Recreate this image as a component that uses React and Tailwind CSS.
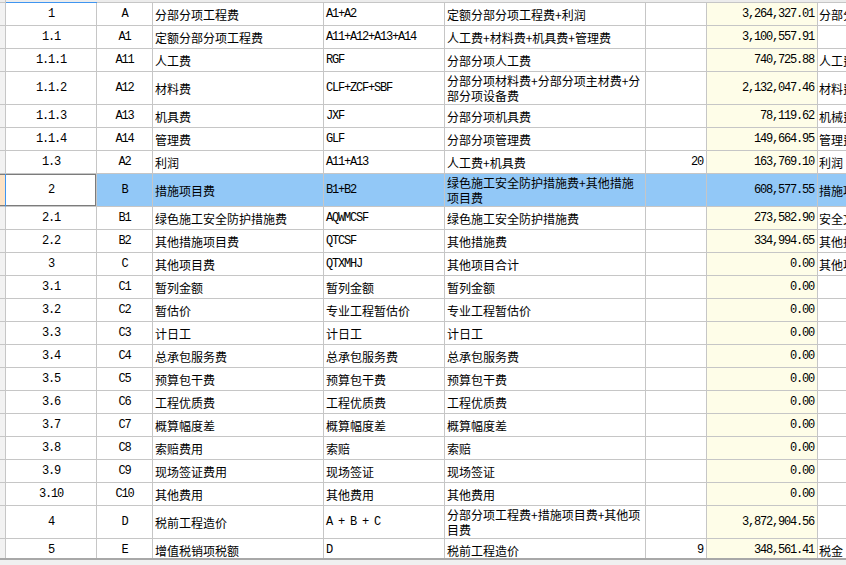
import React from "react";

const rows = [
  { n: "1", c: "A", name: "分部分项工程费", f: "A1+A2", d: "定额分部分项工程费+利润", r: "", v: "3,264,327.01", k: "分部分项工程费" },
  { n: "1.1", c: "A1", name: "定额分部分项工程费", f: "A11+A12+A13+A14", d: "人工费+材料费+机具费+管理费", r: "", v: "3,100,557.91", k: "" },
  { n: "1.1.1", c: "A11", name: "人工费", f: "RGF", d: "分部分项人工费", r: "", v: "740,725.88", k: "人工费" },
  { n: "1.1.2", c: "A12", name: "材料费", f: "CLF+ZCF+SBF", d: "分部分项材料费+分部分项主材费+分部分项设备费", r: "", v: "2,132,047.46", k: "材料费", tall: true },
  { n: "1.1.3", c: "A13", name: "机具费", f: "JXF", d: "分部分项机具费", r: "", v: "78,119.62", k: "机械费" },
  { n: "1.1.4", c: "A14", name: "管理费", f: "GLF", d: "分部分项管理费", r: "", v: "149,664.95", k: "管理费" },
  { n: "1.3", c: "A2", name: "利润", f: "A11+A13", d: "人工费+机具费", r: "20", v: "163,769.10", k: "利润" },
  { n: "2", c: "B", name: "措施项目费", f: "B1+B2", d: "绿色施工安全防护措施费+其他措施项目费", r: "", v: "608,577.55", k: "措施项目费", tall: true, sel: true },
  { n: "2.1", c: "B1", name: "绿色施工安全防护措施费", f: "AQWMCSF", d: "绿色施工安全防护措施费", r: "", v: "273,582.90", k: "安全文明施工费" },
  { n: "2.2", c: "B2", name: "其他措施项目费", f: "QTCSF", d: "其他措施费", r: "", v: "334,994.65", k: "其他措施费" },
  { n: "3", c: "C", name: "其他项目费", f: "QTXMHJ", d: "其他项目合计", r: "", v: "0.00", k: "其他项目费" },
  { n: "3.1", c: "C1", name: "暂列金额", f: "暂列金额", d: "暂列金额", r: "", v: "0.00", k: "" },
  { n: "3.2", c: "C2", name: "暂估价", f: "专业工程暂估价", d: "专业工程暂估价", r: "", v: "0.00", k: "" },
  { n: "3.3", c: "C3", name: "计日工", f: "计日工", d: "计日工", r: "", v: "0.00", k: "" },
  { n: "3.4", c: "C4", name: "总承包服务费", f: "总承包服务费", d: "总承包服务费", r: "", v: "0.00", k: "" },
  { n: "3.5", c: "C5", name: "预算包干费", f: "预算包干费", d: "预算包干费", r: "", v: "0.00", k: "" },
  { n: "3.6", c: "C6", name: "工程优质费", f: "工程优质费", d: "工程优质费", r: "", v: "0.00", k: "" },
  { n: "3.7", c: "C7", name: "概算幅度差", f: "概算幅度差", d: "概算幅度差", r: "", v: "0.00", k: "" },
  { n: "3.8", c: "C8", name: "索赔费用", f: "索赔", d: "索赔", r: "", v: "0.00", k: "" },
  { n: "3.9", c: "C9", name: "现场签证费用", f: "现场签证", d: "现场签证", r: "", v: "0.00", k: "" },
  { n: "3.10", c: "C10", name: "其他费用", f: "其他费用", d: "其他费用", r: "", v: "0.00", k: "" },
  { n: "4", c: "D", name: "税前工程造价", f: "A + B + C", d: "分部分项工程费+措施项目费+其他项目费", r: "", v: "3,872,904.56", k: "", tall: true },
  { n: "5", c: "E", name: "增值税销项税额", f: "D", d: "税前工程造价", r: "9", v: "348,561.41", k: "税金" },
];

const cjk = /[\u4e00-\u9fff]/;

function Txt({ t }) {
  if (!t) return null;
  if (cjk.test(t)) {
    return (
      <span className="font-['Noto_Sans_CJK_SC',sans-serif] text-[12px] leading-[15px] text-black">{t}</span>
    );
  }
  return (
    <span className="font-['Liberation_Mono',monospace] text-[12px] tracking-[-1.2px] leading-[15px] whitespace-pre text-black">{t}</span>
  );
}

const cell = "shrink-0 h-full border-r border-b border-[#c6c6c6] flex items-center overflow-hidden";

function Row({ row }) {
  const sel = row.sel;
  const hl = sel ? "bg-[#92c8f7]" : "";
  return (
    <div className={`flex shrink-0 ${row.tall ? "h-[33px]" : "h-[23px]"}`}>
      <div
        className={`relative w-[6px] ${cell} ${sel ? "bg-[#fde3c6] border-r-[#3f95f0]" : "bg-[#f2f2f2]"}`}
      >
        {sel && <div className="absolute left-0 right-0 top-[-1px] bottom-[-1px] border-y-2 border-[#7c7c7c]" />}
      </div>
      <div className={`relative w-[91px] ${cell} justify-center bg-white`}>
        <Txt t={row.n} />
        {sel && (
          <div className="absolute left-0 right-[-1px] top-[-1px] bottom-[-1px] border-2 border-l-0 border-[#7c7c7c]" />
        )}
      </div>
      <div className={`w-[56px] ${cell} justify-center ${hl}`}>
        <Txt t={row.c} />
      </div>
      <div className={`w-[171px] ${cell} pl-[2px] ${hl}`}>
        <Txt t={row.name} />
      </div>
      <div className={`w-[121px] ${cell} pl-[2px] ${hl}`}>
        <Txt t={row.f} />
      </div>
      <div className={`w-[201px] ${cell} pl-[2px] pr-[1px] ${hl}`}>
        <Txt t={row.d} />
      </div>
      <div className={`w-[61px] ${cell} justify-end pr-[3px] ${hl}`}>
        <Txt t={row.r} />
      </div>
      <div className={`w-[111px] ${cell} justify-end pr-[3px] ${sel ? hl : "bg-[#fefde8]"}`}>
        <Txt t={row.v} />
      </div>
      <div className={`w-[140px] ${cell} pl-[1px] whitespace-nowrap ${hl}`}>
        <Txt t={row.k} />
      </div>
    </div>
  );
}

export default function App() {
  return (
    <div className="w-[846px] h-[565px] overflow-hidden bg-white flex flex-col">
      <div className="flex h-[3px] shrink-0">
        <div className="w-[6px] shrink-0 h-full bg-[#ececec] border-b border-r border-[#c6c6c6]" />
        <div className="w-[91px] shrink-0 h-full bg-[#ececec] border-b border-[#3f95f0]" />
        <div className="flex-1 h-full bg-[#ececec] border-b border-[#c6c6c6]" />
      </div>
      <div className="flex-1 overflow-hidden flex flex-col">
        {rows.map((r) => (
          <Row key={r.n} row={r} />
        ))}
      </div>
      <div className="h-[7px] shrink-0 border-t-2 border-[#a8a8a8] bg-[#f0f0f0]" />
    </div>
  );
}
